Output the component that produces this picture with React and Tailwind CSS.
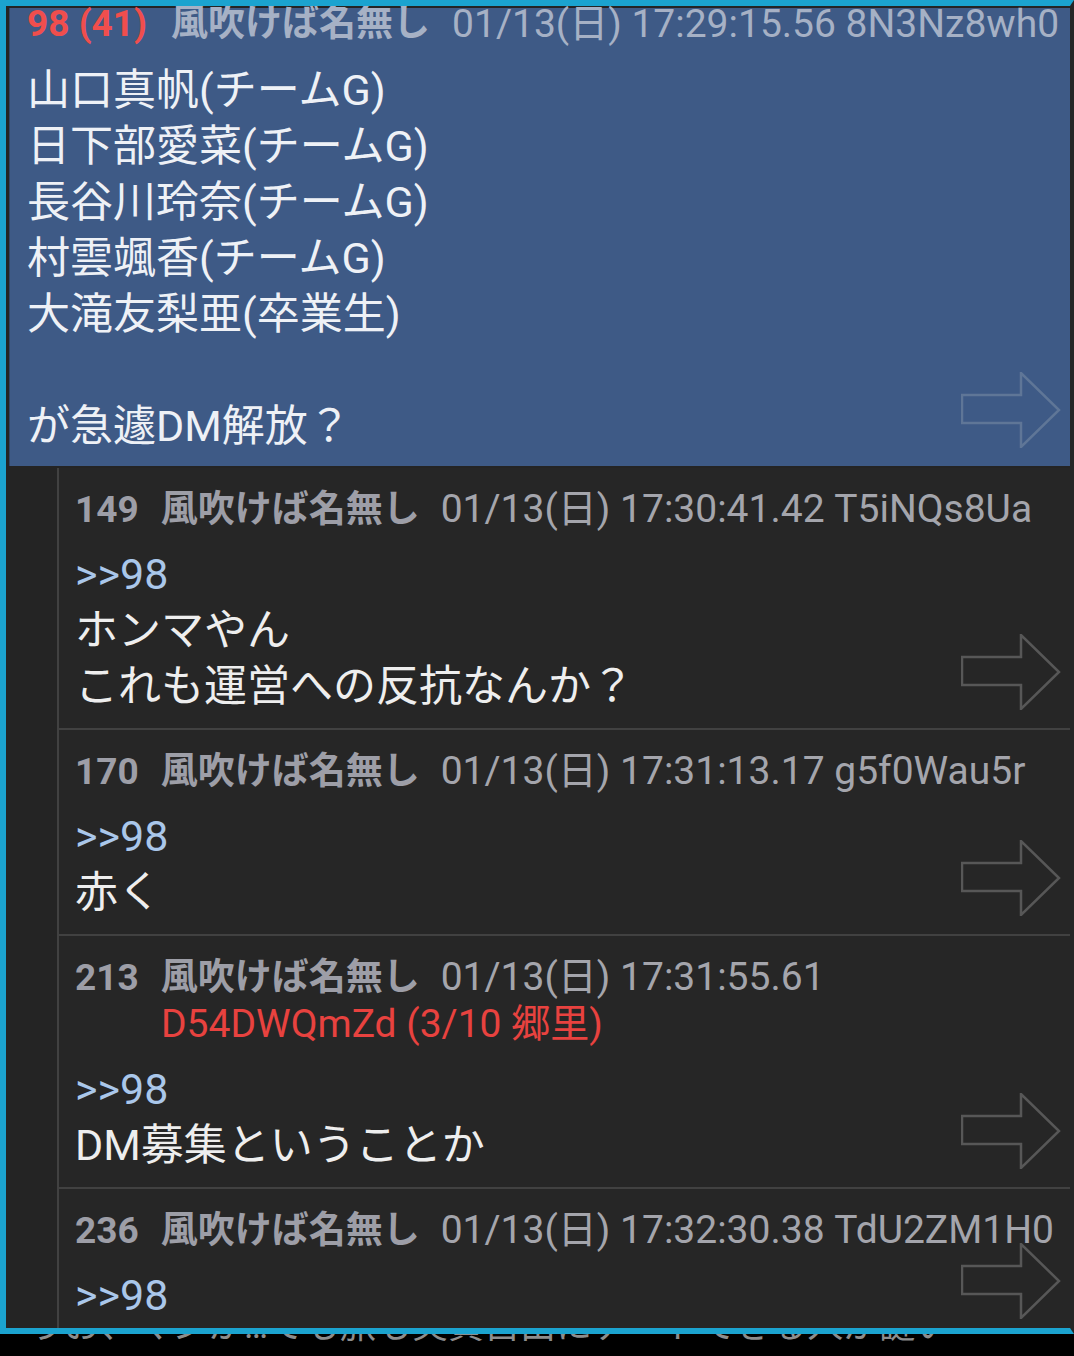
import React from "react";

const font = { fontFamily: 'Roboto, "Noto Sans CJK JP", sans-serif' };

function Arrow({ stroke }) {
  return (
    <svg
      className="absolute right-[9px] bottom-[18px] w-[100px] h-[76px]"
      viewBox="0 0 100 76"
      fill="none"
    >
      <path
        d="M1 23 H60 V1 L98 38 L60 75 V51 H1 Z"
        stroke={stroke}
        strokeWidth="2.5"
        strokeLinejoin="miter"
      />
    </svg>
  );
}

const replies = [
  {
    no: "149",
    date: "01/13(日) 17:30:41.42 T5iNQs8Ua",
    lines: ["ホンマやん", "これも運営への反抗なんか？"],
  },
  {
    no: "170",
    date: "01/13(日) 17:31:13.17 g5f0Wau5r",
    lines: ["赤く"],
  },
  {
    no: "213",
    date: "01/13(日) 17:31:55.61",
    id: "D54DWQmZd (3/10 郷里)",
    lines: ["DM募集ということか"],
  },
  {
    no: "236",
    date: "01/13(日) 17:32:30.38 TdU2ZM1H0",
    lines: [],
  },
];

export default function App() {
  return (
    <div className="w-[1074px] h-[1356px] bg-black overflow-hidden" style={font}>
      <div className="h-[1334px] border-t-[6px] border-l-[6px] border-b-[6px] border-r-[4px] border-t-[#1ba3cf] border-l-[#1ba3cf] border-b-[#1ba3cf] border-r-[#262626] bg-[#242424] overflow-hidden">
        <div className="pt-[2px] pl-[3px]">
          {/* main post */}
          <div className="relative bg-[#3e5a86] border-l border-[#2f4466] pl-[17px] pb-[12px]">
            <div className="h-[32px] leading-[32px] text-[37px] whitespace-nowrap flex items-center">
              <span className="font-bold text-[#f04e4d] mr-[24px]">98 (41)</span>
              <span className="font-bold text-[#a6b1c5] mr-[22px]">風吹けば名無し</span>
              <span className="text-[39px] text-[#a6b1c5]">01/13(日) 17:29:15.56 8N3Nz8wh0</span>
            </div>
            <div className="mt-[22px] text-[43px] leading-[56px] text-[#eef1f6]">
              <div>山口真帆(チームG)</div>
              <div>日下部愛菜(チームG)</div>
              <div>長谷川玲奈(チームG)</div>
              <div>村雲颯香(チームG)</div>
              <div>大滝友梨亜(卒業生)</div>
              <div>&nbsp;</div>
              <div>が急遽DM解放？</div>
            </div>
            <Arrow stroke="#5f7697" />
          </div>

          {/* replies */}
          <div className="mt-[2px] ml-[48px]">
            {replies.map((r) => (
              <div
                key={r.no}
                className="relative border-l-2 border-b-2 border-[#414141] bg-[#262626] pl-[16px] pt-[18px] pb-[14px]"
              >
                <div className="h-[47px] leading-[47px] text-[37px] whitespace-nowrap flex items-center">
                  <span className="font-bold text-[#9d9ea7] mr-[22px]">{r.no}</span>
                  <span className="font-bold text-[#9d9ea7] mr-[21px]">風吹けば名無し</span>
                  <span className="text-[39px] text-[#a4a5ac]">{r.date}</span>
                </div>
                {r.id && (
                  <div className="h-[47px] leading-[47px] text-[39px] pl-[86px] text-[#e8423f] whitespace-nowrap">
                    {r.id}
                  </div>
                )}
                <div className="mt-[13px] text-[43px] leading-[56px] text-[#eeeeee]">
                  <div className="text-[#aac7ea]">&gt;&gt;98</div>
                  {r.lines.map((l) => (
                    <div key={l}>{l}</div>
                  ))}
                </div>
                <Arrow stroke="#575757" />
              </div>
            ))}
          </div>
        </div>
      </div>
      <div className="h-[22px] overflow-hidden pl-[28px]">
        <div className="-mt-[28px] text-[36px] leading-[40px] text-[#8d8d8d] whitespace-nowrap">
          うお、マジか…でも旅も実質自由にデートできる人が謎い
        </div>
      </div>
    </div>
  );
}
